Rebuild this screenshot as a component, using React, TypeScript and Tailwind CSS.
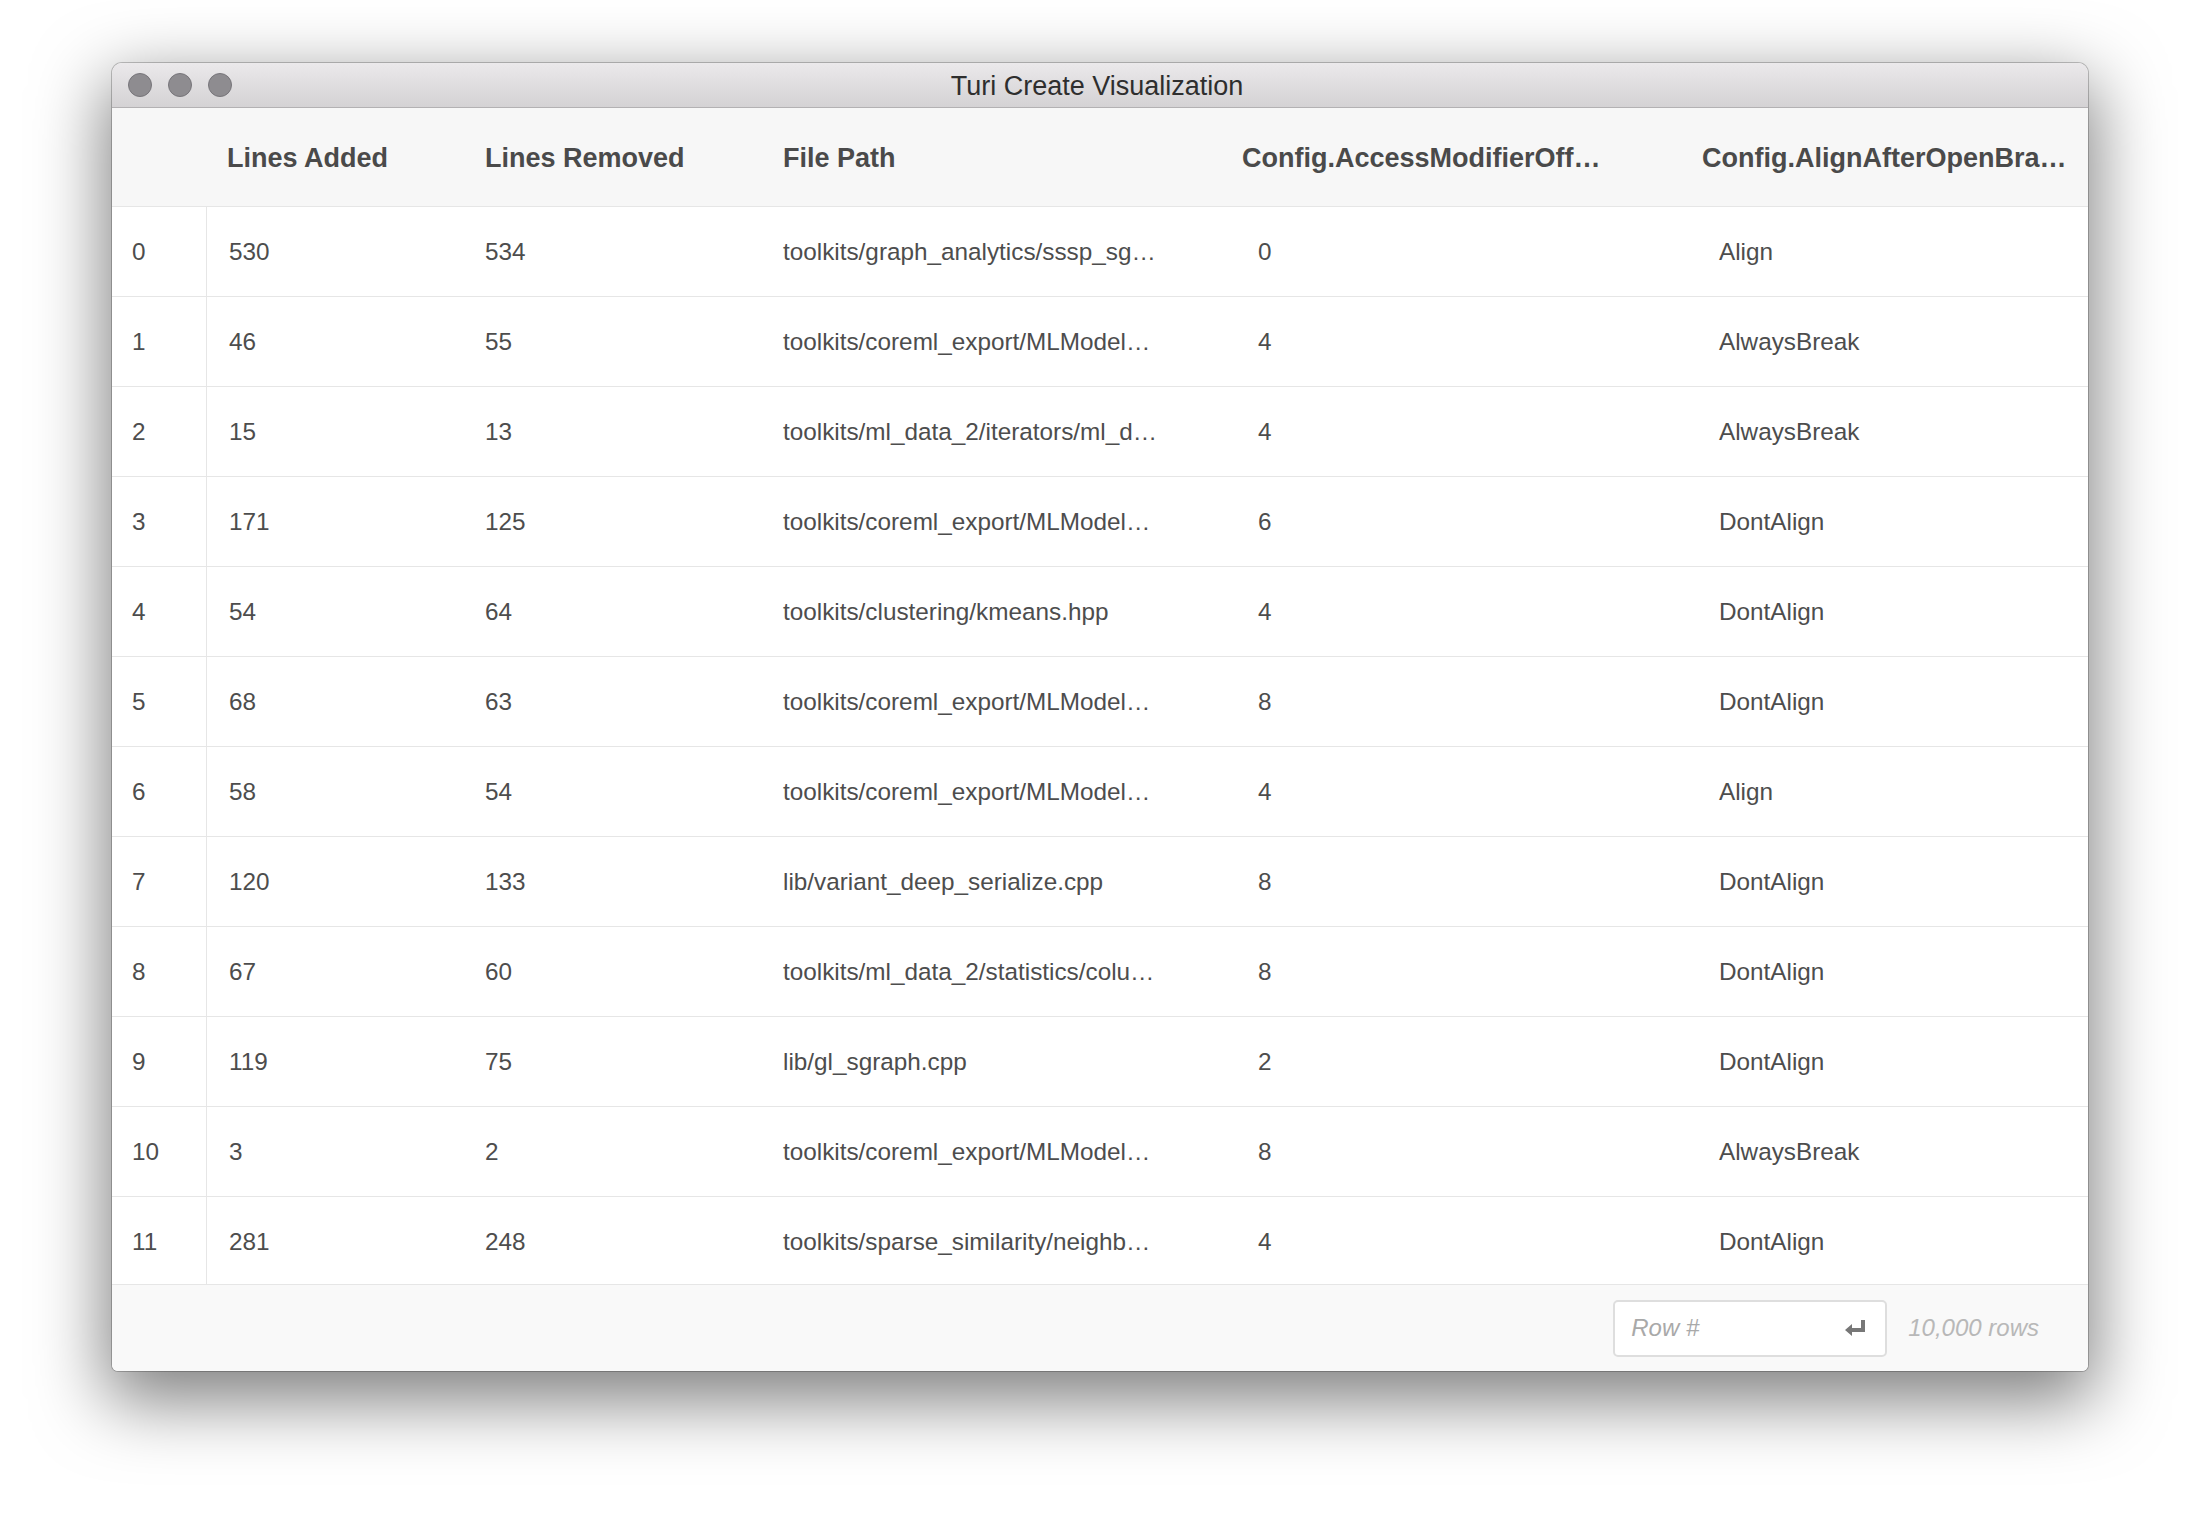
import React from 'react';

const rows = [
  { added: '530', removed: '534', path: 'toolkits/graph_analytics/sssp_sg…', offset: '0', align: 'Align' },
  { added: '46', removed: '55', path: 'toolkits/coreml_export/MLModel…', offset: '4', align: 'AlwaysBreak' },
  { added: '15', removed: '13', path: 'toolkits/ml_data_2/iterators/ml_d…', offset: '4', align: 'AlwaysBreak' },
  { added: '171', removed: '125', path: 'toolkits/coreml_export/MLModel…', offset: '6', align: 'DontAlign' },
  { added: '54', removed: '64', path: 'toolkits/clustering/kmeans.hpp', offset: '4', align: 'DontAlign' },
  { added: '68', removed: '63', path: 'toolkits/coreml_export/MLModel…', offset: '8', align: 'DontAlign' },
  { added: '58', removed: '54', path: 'toolkits/coreml_export/MLModel…', offset: '4', align: 'Align' },
  { added: '120', removed: '133', path: 'lib/variant_deep_serialize.cpp', offset: '8', align: 'DontAlign' },
  { added: '67', removed: '60', path: 'toolkits/ml_data_2/statistics/colu…', offset: '8', align: 'DontAlign' },
  { added: '119', removed: '75', path: 'lib/gl_sgraph.cpp', offset: '2', align: 'DontAlign' },
  { added: '3', removed: '2', path: 'toolkits/coreml_export/MLModel…', offset: '8', align: 'AlwaysBreak' },
  { added: '281', removed: '248', path: 'toolkits/sparse_similarity/neighb…', offset: '4', align: 'DontAlign' },
];

// shared column template so header and body line up
const cols = 'grid grid-cols-[95px_256px_298px_475px_461px_1fr]';

function ReturnIcon() {
  return (
    <svg width="20" height="16" viewBox="0 0 20 16" className="shrink-0">
      <path d="M20 0 H16 V8 H7 V4 L0 10 L7 16 V12 H20 Z" fill="#777777" />
    </svg>
  );
}

export default function App() {
  return (
    <div className="w-[2200px] h-[1532px] bg-white pt-[63px] pl-[112px] font-['Liberation_Sans',Arial,sans-serif]">
      <div className="w-[1976px] h-[1308px] flex flex-col rounded-t-[10px] rounded-b-[6px] overflow-hidden bg-white shadow-[0_0_0_1px_rgba(0,0,0,0.22),0_24px_70px_6px_rgba(0,0,0,0.5)]">
        {/* Title bar */}
        <div className="relative h-[45px] shrink-0 flex items-center justify-center pt-[2px] bg-gradient-to-b from-[#ebe9eb] to-[#d4d2d4] border-b border-[#b3b1b3]">
          <div className="absolute left-[16px] top-[10px] flex gap-[16px]">
            <span className="w-[24px] h-[24px] rounded-full bg-[#8e8c90] border border-[#77757a]" />
            <span className="w-[24px] h-[24px] rounded-full bg-[#8e8c90] border border-[#77757a]" />
            <span className="w-[24px] h-[24px] rounded-full bg-[#8e8c90] border border-[#77757a]" />
          </div>
          <span className="text-[27px] text-[#2e2e2e] leading-none -ml-[6px]">Turi Create Visualization</span>
        </div>

        {/* Column headers */}
        <div className={`${cols} h-[99px] shrink-0 items-center pt-[2px] bg-[#f7f7f7] border-b border-[#e6e6e6] text-[27px] font-bold text-[#4a4a4a]`}>
          <div />
          <div className="pl-[20px]">Lines Added</div>
          <div className="pl-[22px]">Lines Removed</div>
          <div className="pl-[22px]">File Path</div>
          <div className="pl-[6px] whitespace-nowrap">Config.AccessModifierOff…</div>
          <div className="pl-[5px] whitespace-nowrap">Config.AlignAfterOpenBra…</div>
        </div>

        {/* Rows */}
        <div className="h-[1077px] shrink-0 overflow-hidden text-[24.3px] text-[#4d4d4d]">
          {rows.map((r, i) => (
            <div key={i} className={`${cols} h-[90px] items-stretch border-b border-[#e6e6e6]`}>
              <div className="flex items-center pt-[2px] pl-[20px] border-r border-[#e6e6e6]">{i}</div>
              <div className="flex items-center pt-[2px] pl-[22px]">{r.added}</div>
              <div className="flex items-center pt-[2px] pl-[22px]">{r.removed}</div>
              <div className="flex items-center pt-[2px] pl-[22px] whitespace-nowrap">{r.path}</div>
              <div className="flex items-center pt-[2px] pl-[22px]">{r.offset}</div>
              <div className="flex items-center pt-[2px] pl-[22px]">{r.align}</div>
            </div>
          ))}
        </div>

        {/* Footer */}
        <div className="h-[87px] shrink-0 flex items-center justify-end gap-[21px] pr-[49px] bg-[#f9f9f9] border-t border-[#e6e6e6]">
          <div className="w-[274px] h-[57px] flex items-center justify-between pl-[16px] pr-[20px] bg-white border-2 border-[#dedede] rounded-[5px]">
            <span className="text-[24px] italic text-[#a9a9a9]">Row #</span>
            <ReturnIcon />
          </div>
          <span className="text-[24px] italic text-[#b8b8b8]">10,000 rows</span>
        </div>
      </div>
    </div>
  );
}
